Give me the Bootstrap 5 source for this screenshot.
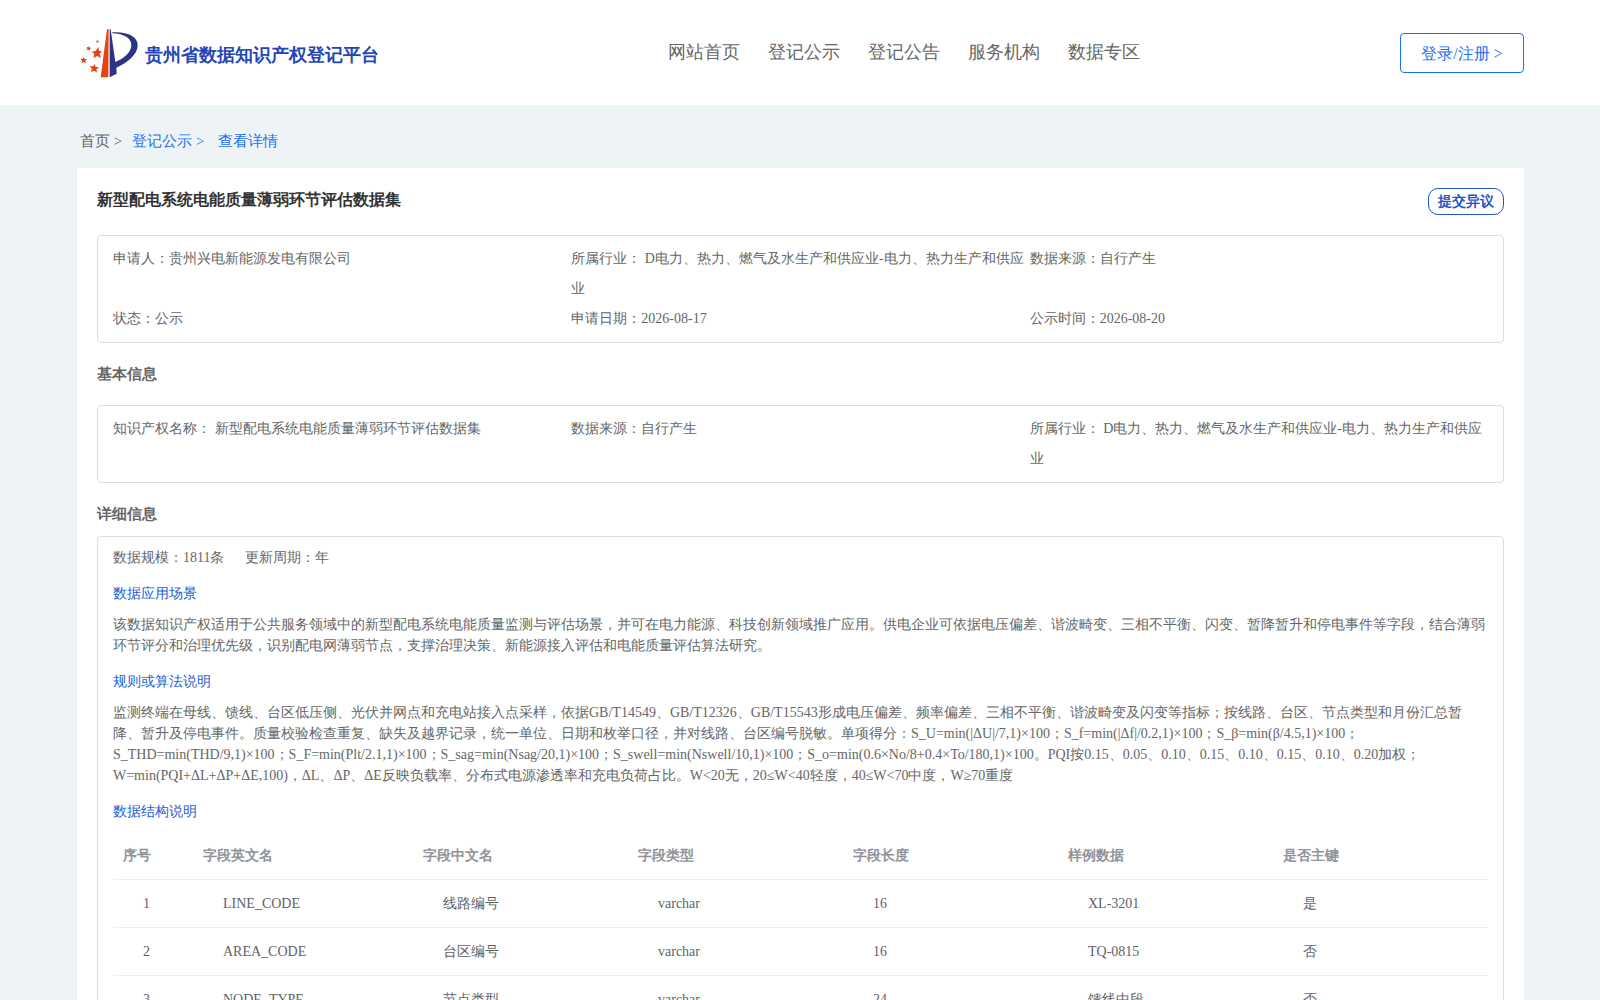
<!DOCTYPE html>
<html lang="en">
<head>
<meta charset="utf-8">
<meta name="viewport" content="width=device-width, initial-scale=1">
<title>贵州省数据知识产权登记平台</title>
<link rel="stylesheet" href="https://cdn.jsdelivr.net/npm/bootstrap@5.3.0/dist/css/bootstrap.min.css">
<style>
  body { font-family: "Liberation Serif", serif; font-size: 14px; line-height: 21px; color: #666; background: #eef3f6; }
  button { font-family: inherit; }
  .site-gutter { padding-left: 77px; padding-right: 76px; }
  .site-header { height: 105px; }
  .site-brand { width: 331px; gap: 5px; color: #2346b5; font-size: 18px; line-height: 24px; font-weight: 700; text-decoration: none; }
  .site-brand svg { margin-top: 1px; }
  .site-brand span { padding-top: 5px; }
  .site-menu { gap: 28px; font-size: 18px; line-height: 24px; padding-bottom: 2px; }
  .site-menu a { color: #666; text-decoration: none; }
  .login-btn { --bs-btn-color: #1a70f2; --bs-btn-border-color: #1a70f2; --bs-btn-hover-bg: #1a70f2; --bs-btn-hover-color: #fff; --bs-btn-font-size: 16px; --bs-btn-line-height: 24px; --bs-btn-border-radius: 4px; --bs-btn-padding-x: 20px; min-width: 124px; padding-top: 8px; padding-bottom: 6px; }
  .crumbs { height: 63px; padding-left: 3px; padding-top: 10px; font-size: 15px; color: #666; }
  .crumbs a { text-decoration: none; color: #1a70f2; }
  .crumbs a + a { margin-left: 10px; }
  .crumbs a + a + a { margin-left: 14px; }
  .crumbs .crumb-home { color: #666; }
  .sheet { padding: 20px; }
  .sheet-title { font-size: 16px; line-height: 24px; font-weight: 700; color: #333; }
  .objection-btn { --bs-btn-color: #1f56c3; --bs-btn-border-color: #1f56c3; --bs-btn-hover-bg: #1f56c3; --bs-btn-hover-color: #fff; --bs-btn-font-size: 14px; --bs-btn-line-height: 21px; --bs-btn-font-weight: 700; --bs-btn-border-radius: 10px; --bs-btn-padding-x: 9px; --bs-btn-padding-y: 2px; }
  .panel { border: 1px solid #ddd; border-radius: 4px; padding: 10px 15px; }
  .facts { line-height: 30px; padding: 8px 15px; }
  .block-title { font-size: 15px; line-height: 22px; font-weight: 700; margin: 0; }
  .detail-title { margin: 20px 0 11px; }
  .scale-line { gap: 21px; }
  .part-title { font-size: 14px; line-height: 21px; color: #2160d2; margin: 15px 0 10px; }
  .fields { --bs-table-bg: transparent; table-layout: fixed; margin: 0; border-color: #ebeef5; }
  .fields th { padding: 12px 10px 13px; color: #909399; }
  .fields td { padding: 13px 30px; color: #606266; }
  .fields thead tr { height: 47px; }
  .fields tbody tr { height: 48px; }
  .col-no { width: 80px; }
  .col-en { width: 16%; }
</style>
<script src="https://cdn.jsdelivr.net/npm/bootstrap@5.3.0/dist/js/bootstrap.bundle.min.js" defer></script>
</head>
<body>
<header class="site-header site-gutter bg-white d-flex align-items-center justify-content-between">
  <a class="site-brand d-flex align-items-center" href="#">
    <svg width="63" height="53" viewBox="51 50 189 159" aria-hidden="true">
      <path fill="#e64312" d="M141 57h5l-1 144h-23z"/>
      <path fill="#2b3385" d="M149 57h3l14 98c26-10 47-28 48-50 1-20-22-35-57-36v-3c45-3 76 12 76 38 0 28-28 52-64 68l1 18-21 11z"/>
      <g fill="#e64312">
        <path d="M115 110l2 12 9 1-7 7 4 13-11-6-12 6 3-12-8-7 12-2z"/>
        <path d="M71 140l3 6 8 1-6 4 2 8-7-4-7 3 2-7-5-6h7z"/>
        <path d="M104 161l3 9 11 1-9 6 2 10-8-6-10 4 3-10-7-8 11 1z"/>
        <path d="M88 107l1 5 5 1-5 3v5l-4-3-5 1 2-5-2-4 5 1z"/>
        <path d="M113 89l1 3h3l-2 2v3l-3-1-3 1 1-3-2-3h4z"/>
      </g>
    </svg>
    <span>贵州省数据知识产权登记平台</span>
  </a>
  <nav class="site-menu d-flex">
    <a href="#">网站首页</a>
    <a href="#">登记公示</a>
    <a href="#">登记公告</a>
    <a href="#">服务机构</a>
    <a href="#">数据专区</a>
  </nav>
  <button type="button" class="btn login-btn">登录/注册 &gt;</button>
</header>

<main class="site-gutter pb-5">
  <nav class="crumbs d-flex align-items-center" aria-label="breadcrumb">
    <a class="crumb-home" href="#">首页 &gt;</a>
    <a href="#">登记公示 &gt;</a>
    <a href="#">查看详情</a>
  </nav>

  <div class="sheet bg-white">
    <div class="d-flex justify-content-between align-items-start mb-3 pb-1">
      <h1 class="sheet-title m-0">新型配电系统电能质量薄弱环节评估数据集</h1>
      <button type="button" class="btn objection-btn">提交异议</button>
    </div>

    <div class="panel facts">
      <div class="row g-0">
        <div class="col-4">申请人：贵州兴电新能源发电有限公司</div>
        <div class="col-4">所属行业： D电力、热力、燃气及水生产和供应业-电力、热力生产和供应业</div>
        <div class="col-4">数据来源：自行产生</div>
        <div class="col-4">状态：公示</div>
        <div class="col-4">申请日期：2026-08-17</div>
        <div class="col-4">公示时间：2026-08-20</div>
      </div>
    </div>

    <h2 class="block-title my-3 py-1">基本信息</h2>
    <div class="panel facts">
      <div class="row g-0">
        <div class="col-4">知识产权名称： 新型配电系统电能质量薄弱环节评估数据集</div>
        <div class="col-4">数据来源：自行产生</div>
        <div class="col-4">所属行业： D电力、热力、燃气及水生产和供应业-电力、热力生产和供应业</div>
      </div>
    </div>

    <h2 class="block-title detail-title">详细信息</h2>
    <div class="panel">
      <div class="d-flex scale-line">
        <span>数据规模：1811条</span>
        <span>更新周期：年</span>
      </div>
      <h3 class="part-title">数据应用场景</h3>
      <p class="m-0">该数据知识产权适用于公共服务领域中的新型配电系统电能质量监测与评估场景，并可在电力能源、科技创新领域推广应用。供电企业可依据电压偏差、谐波畸变、三相不平衡、闪变、暂降暂升和停电事件等字段，结合薄弱环节评分和治理优先级，识别配电网薄弱节点，支撑治理决策、新能源接入评估和电能质量评估算法研究。</p>
      <h3 class="part-title">规则或算法说明</h3>
      <p class="m-0">监测终端在母线、馈线、台区低压侧、光伏并网点和充电站接入点采样，依据GB/T14549、GB/T12326、GB/T15543形成电压偏差、频率偏差、三相不平衡、谐波畸变及闪变等指标；按线路、台区、节点类型和月份汇总暂降、暂升及停电事件。质量校验检查重复、缺失及越界记录，统一单位、日期和枚举口径，并对线路、台区编号脱敏。单项得分：S_U=min(|ΔU|/7,1)×100；S_f=min(|Δf|/0.2,1)×100；S_β=min(β/4.5,1)×100；S_THD=min(THD/9,1)×100；S_F=min(Plt/2.1,1)×100；S_sag=min(Nsag/20,1)×100；S_swell=min(Nswell/10,1)×100；S_o=min(0.6×No/8+0.4×To/180,1)×100。PQI按0.15、0.05、0.10、0.15、0.10、0.15、0.10、0.20加权；W=min(PQI+ΔL+ΔP+ΔE,100)，ΔL、ΔP、ΔE反映负载率、分布式电源渗透率和充电负荷占比。W&lt;20无，20≤W&lt;40轻度，40≤W&lt;70中度，W≥70重度</p>
      <h3 class="part-title">数据结构说明</h3>
      <table class="table fields">
        <colgroup><col class="col-no"><col class="col-en"><col><col><col><col><col></colgroup>
        <thead>
          <tr><th scope="col">序号</th><th scope="col">字段英文名</th><th scope="col">字段中文名</th><th scope="col">字段类型</th><th scope="col">字段长度</th><th scope="col">样例数据</th><th scope="col">是否主键</th></tr>
        </thead>
        <tbody>
          <tr><td>1</td><td>LINE_CODE</td><td>线路编号</td><td>varchar</td><td>16</td><td>XL-3201</td><td>是</td></tr>
          <tr><td>2</td><td>AREA_CODE</td><td>台区编号</td><td>varchar</td><td>16</td><td>TQ-0815</td><td>否</td></tr>
          <tr><td>3</td><td>NODE_TYPE</td><td>节点类型</td><td>varchar</td><td>24</td><td>馈线中段</td><td>否</td></tr>
        </tbody>
      </table>
    </div>
  </div>
</main>
</body>
</html>
